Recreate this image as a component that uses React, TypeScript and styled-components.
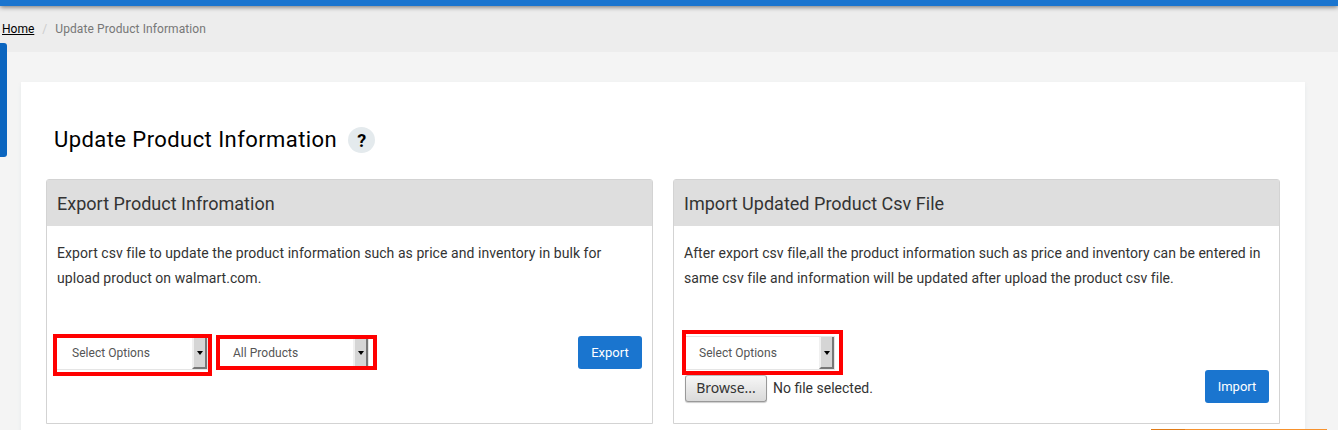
import React from 'react';
import styled, { createGlobalStyle } from 'styled-components';

const Global = createGlobalStyle`
  * { box-sizing: border-box; }
  body {
    margin: 0;
    background: #f4f4f4;
    font-family: Roboto, "Liberation Sans", sans-serif;
    color: #333;
    overflow: hidden;
  }
`;

const Page = styled.div`
  position: relative;
  height: 430px;
  overflow: hidden;
`;

const TopBar = styled.header`
  position: relative;
  height: 6px;
  background: #1a75cf;
  box-shadow: 0 1px 5px rgba(0, 0, 0, 0.55);
`;

const Breadcrumb = styled.nav`
  display: flex;
  align-items: center;
  height: 46px;
  padding-left: 2px;
  background: #ededed;
  font-size: 12px;
  line-height: 46px;
`;

const HomeLink = styled.a`
  color: #000;
  text-decoration: underline;
`;

const Slash = styled.span`
  width: 21px;
  text-align: center;
  color: #ccc;
`;

const Current = styled.span`
  color: #777;
  letter-spacing: 0.09px;
`;

const SideTab = styled.div`
  position: absolute;
  left: 0;
  top: 43px;
  width: 7px;
  height: 114px;
  background: #0b65bf;
  border-radius: 0 3px 3px 0;
`;

const Card = styled.main`
  margin: 30px 33px 0 21px;
  padding: 44px 25px 0;
  height: 400px;
  background: #fff;
  box-shadow: 0 2px 4px #e6ebec;
`;

const TitleRow = styled.div`
  display: flex;
  align-items: center;
  gap: 11px;
  height: 27px;
  padding-left: 8px;
`;

const Title = styled.h1`
  margin: 0;
  font-size: 22px;
  font-weight: 400;
  line-height: 27px;
  letter-spacing: 0.43px;
  color: #000;
`;

const Help = styled.span`
  width: 27px;
  height: 26px;
  border-radius: 50%;
  background: #e4eaed;
  color: #000;
  font-size: 18px;
  font-weight: 700;
  line-height: 27px;
  text-align: center;
`;

const Panels = styled.div`
  display: grid;
  grid-template-columns: 1fr 1fr;
  gap: 20px;
  margin-top: 26px;
`;

const Panel = styled.section`
  height: 245px;
  border: 1px solid #d3d3d3;
  border-radius: 3px 3px 0 0;
`;

const PanelTitle = styled.h2`
  margin: 0;
  height: 46px;
  padding-left: 10px;
  background: #dedede;
  font-size: 18px;
  font-weight: 400;
  line-height: 47px;
  letter-spacing: 0.02px;
`;

const Description = styled.p<{ $spacing: number }>`
  margin: 15px 0 0;
  padding-left: 10px;
  height: 50px;
  font-size: 14px;
  line-height: 25px;
  letter-spacing: ${(p) => p.$spacing}px;
  white-space: nowrap;
`;

const Controls = styled.div<{ $top: number; $left: number }>`
  display: flex;
  align-items: flex-start;
  padding: ${(p) => p.$top}px 10px 0 ${(p) => p.$left}px;
`;

const Stack = styled.div`
  display: flex;
  flex-direction: column;
`;

const Highlight = styled.div<{ $w: number; $h: number; $top?: number; $left?: number; $pad?: number }>`
  width: ${(p) => p.$w}px;
  height: ${(p) => p.$h}px;
  margin: ${(p) => p.$top ?? 0}px 0 0 ${(p) => p.$left ?? 0}px;
  padding-top: ${(p) => p.$pad ?? 0}px;
  border: 4px solid #f00;
  background: #fff;
`;

const Field = styled.div<{ $w: number; $h: number; $top?: boolean; $bottom?: boolean; $text: number; $line: number }>`
  display: flex;
  justify-content: space-between;
  width: ${(p) => p.$w}px;
  height: ${(p) => p.$h}px;
  padding-left: ${(p) => p.$text}px;
  border: 0 solid #e5e5e5;
  border-top-width: ${(p) => (p.$top ? 1 : 0)}px;
  border-bottom-width: ${(p) => (p.$bottom ? 1 : 0)}px;
  border-right-width: 1px;
  color: #555;
  font-size: 12px;
  line-height: ${(p) => p.$line}px;
  letter-spacing: 0.03px;
  white-space: nowrap;
`;

const Arrow = styled.span<{ $bottom?: boolean }>`
  display: flex;
  justify-content: center;
  width: 15px;
  height: 100%;
  border-left: 2px solid #f0f0f0;
  border-right: 2px solid #777;
  border-bottom: ${(p) => (p.$bottom ? '2px solid #777' : '0')};
  background: #d5d5d5;
`;

const Caret = styled.i<{ $top: number }>`
  width: 0;
  height: 0;
  margin-top: ${(p) => p.$top}px;
  border: 3px solid transparent;
  border-top: 4px solid #000;
  border-bottom: 0;
`;

const Button = styled.button<{ $top: number }>`
  width: 64px;
  height: 33px;
  margin: ${(p) => p.$top}px 0 0 auto;
  padding: 0;
  border: 0;
  border-radius: 3px;
  background: #1a75cf;
  color: #fff;
  font: 400 13px/33px Roboto, sans-serif;
`;

const FileRow = styled.div`
  display: flex;
  align-items: flex-start;
  gap: 6px;
  height: 28px;
  padding-left: 3px;
  font-size: 14px;
  line-height: 26px;
`;

const Browse = styled.button`
  width: 82px;
  height: 27px;
  padding: 0 0 1px;
  border: 1px solid #999;
  border-top-color: #bbb;
  border-radius: 3px;
  background: linear-gradient(#f6f6f6, #dadada);
  box-shadow: 0 1px 1px #ccc;
  color: #333;
  font: 400 14px/24px "Noto Sans", sans-serif;
`;

const BottomStrip = styled.div`
  position: absolute;
  left: 1151px;
  top: 429px;
  width: 176px;
  height: 1px;
  border-left: 34px solid #e07b16;
  background: #f7922d;
`;

export default function App() {
  return (
    <Page>
      <Global />
      <TopBar />
      <Breadcrumb>
        <HomeLink>Home</HomeLink>
        <Slash>/</Slash>
        <Current>Update Product Information</Current>
      </Breadcrumb>
      <SideTab />
      <Card>
        <TitleRow>
          <Title>Update Product Information</Title>
          <Help>?</Help>
        </TitleRow>
        <Panels>
          <Panel>
            <PanelTitle>Export Product Infromation</PanelTitle>
            <Description $spacing={0.06}>
              Export csv file to update the product information such as price and inventory in bulk for
              <br />
              upload product on walmart.com.
            </Description>
            <Controls $top={43} $left={6}>
              <Highlight $w={159} $h={42}>
                <Field $w={151} $h={32} $bottom $text={15} $line={30}>
                  Select Options
                  <Arrow $bottom>
                    <Caret $top={13} />
                  </Arrow>
                </Field>
              </Highlight>
              <Highlight $w={161} $h={35} $top={1} $left={4}>
                <Field $w={149} $h={27} $text={13} $line={28}>
                  All Products
                  <Arrow>
                    <Caret $top={12} />
                  </Arrow>
                </Field>
              </Highlight>
              <Button $top={2}>Export</Button>
            </Controls>
          </Panel>
          <Panel>
            <PanelTitle>Import Updated Product Csv File</PanelTitle>
            <Description $spacing={0.045}>
              After export csv file,all the product information such as price and inventory can be entered in
              <br />
              same csv file and information will be updated after upload the product csv file.
            </Description>
            <Controls $top={39} $left={8}>
              <Stack>
                <Highlight $w={161} $h={45} $pad={2}>
                  <Field $w={149} $h={34} $top $bottom $text={13} $line={32}>
                    Select Options
                    <Arrow $bottom>
                      <Caret $top={14} />
                    </Arrow>
                  </Field>
                </Highlight>
                <FileRow>
                  <Browse>Browse...</Browse>
                  <span>No file selected.</span>
                </FileRow>
              </Stack>
              <Button $top={40}>Import</Button>
            </Controls>
          </Panel>
        </Panels>
      </Card>
      <BottomStrip />
    </Page>
  );
}
